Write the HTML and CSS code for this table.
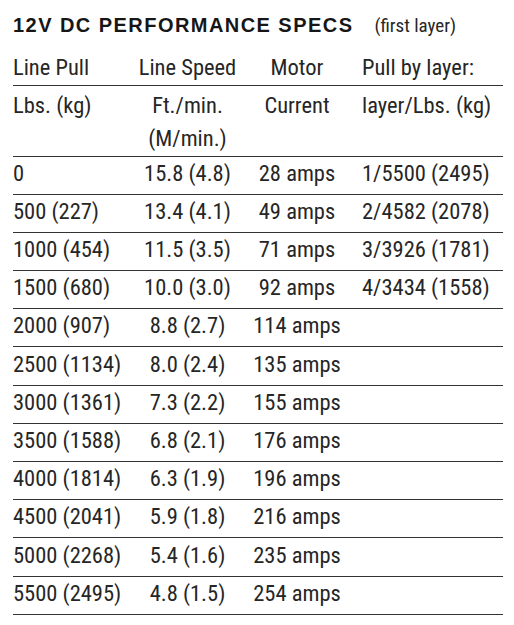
FILE: index.html
```html
<!DOCTYPE html>
<html>
<head>
<meta charset="utf-8">
<link rel="stylesheet" href="styles.css">
</head>
<body>
<div class="specs">
  <h1 class="title"><span class="title-main">12V DC PERFORMANCE SPECS</span><span class="title-note">(first layer)</span></h1>
  <div class="row head1">
    <div class="c1">Line Pull</div>
    <div class="c2">Line Speed</div>
    <div class="c3">Motor</div>
    <div class="c4">Pull by layer:</div>
  </div>
  <div class="row head2">
    <div class="c1">Lbs. (kg)</div>
    <div class="c2">Ft./min.<br>(M/min.)</div>
    <div class="c3">Current</div>
    <div class="c4">layer/Lbs. (kg)</div>
  </div>
  <div class="row"><div class="c1">0</div><div class="c2">15.8 (4.8)</div><div class="c3">28 amps</div><div class="c4">1/5500 (2495)</div></div>
  <div class="row"><div class="c1">500 (227)</div><div class="c2">13.4 (4.1)</div><div class="c3">49 amps</div><div class="c4">2/4582 (2078)</div></div>
  <div class="row"><div class="c1">1000 (454)</div><div class="c2">11.5 (3.5)</div><div class="c3">71 amps</div><div class="c4">3/3926 (1781)</div></div>
  <div class="row"><div class="c1">1500 (680)</div><div class="c2">10.0 (3.0)</div><div class="c3">92 amps</div><div class="c4">4/3434 (1558)</div></div>
  <div class="row"><div class="c1">2000 (907)</div><div class="c2">8.8 (2.7)</div><div class="c3">114 amps</div><div class="c4"></div></div>
  <div class="row"><div class="c1">2500 (1134)</div><div class="c2">8.0 (2.4)</div><div class="c3">135 amps</div><div class="c4"></div></div>
  <div class="row"><div class="c1">3000 (1361)</div><div class="c2">7.3 (2.2)</div><div class="c3">155 amps</div><div class="c4"></div></div>
  <div class="row"><div class="c1">3500 (1588)</div><div class="c2">6.8 (2.1)</div><div class="c3">176 amps</div><div class="c4"></div></div>
  <div class="row"><div class="c1">4000 (1814)</div><div class="c2">6.3 (1.9)</div><div class="c3">196 amps</div><div class="c4"></div></div>
  <div class="row"><div class="c1">4500 (2041)</div><div class="c2">5.9 (1.8)</div><div class="c3">216 amps</div><div class="c4"></div></div>
  <div class="row"><div class="c1">5000 (2268)</div><div class="c2">5.4 (1.6)</div><div class="c3">235 amps</div><div class="c4"></div></div>
  <div class="row"><div class="c1">5500 (2495)</div><div class="c2">4.8 (1.5)</div><div class="c3">254 amps</div><div class="c4"></div></div>
</div>
</body>
</html>
```

FILE: styles.css
```css
html, body {
  margin: 0;
  padding: 0;
  background: #ffffff;
}

.specs {
  margin-left: 13px;
  width: 490px;
  color: #262626;
  font-family: "Roboto", "Open Sans", sans-serif;
  font-stretch: 75%;
  font-size: 22.5px;
}

.title {
  margin: 13px 0 0 0;
  font-size: 20px;
  line-height: 24px;
  font-weight: normal;
  display: flex;
  align-items: baseline;
  gap: 21px;
}

.title-main {
  font-family: "Liberation Sans", Arial, sans-serif;
  font-stretch: normal;
  font-weight: bold;
  letter-spacing: 1.45px;
  color: #161616;
}

.title-note {
  font-size: 19px;
  color: #262626;
}

.row {
  display: grid;
  grid-template-columns: 117px 115px 104px 154px;
  line-height: 28px;
  padding-top: 2.2px;
  padding-bottom: 7px;
  border-bottom: 1px solid #333333;
}

.row.head1 {
  padding-top: 14.5px;
  padding-bottom: 4.5px;
}

.row.head2 {
  line-height: 33px;
  padding-top: 3px;
  padding-bottom: 0.5px;
}

.c2, .c3 {
  text-align: center;
}

.c4 {
  padding-left: 13px;
  white-space: nowrap;
}

.c1 {
  white-space: nowrap;
}
```
